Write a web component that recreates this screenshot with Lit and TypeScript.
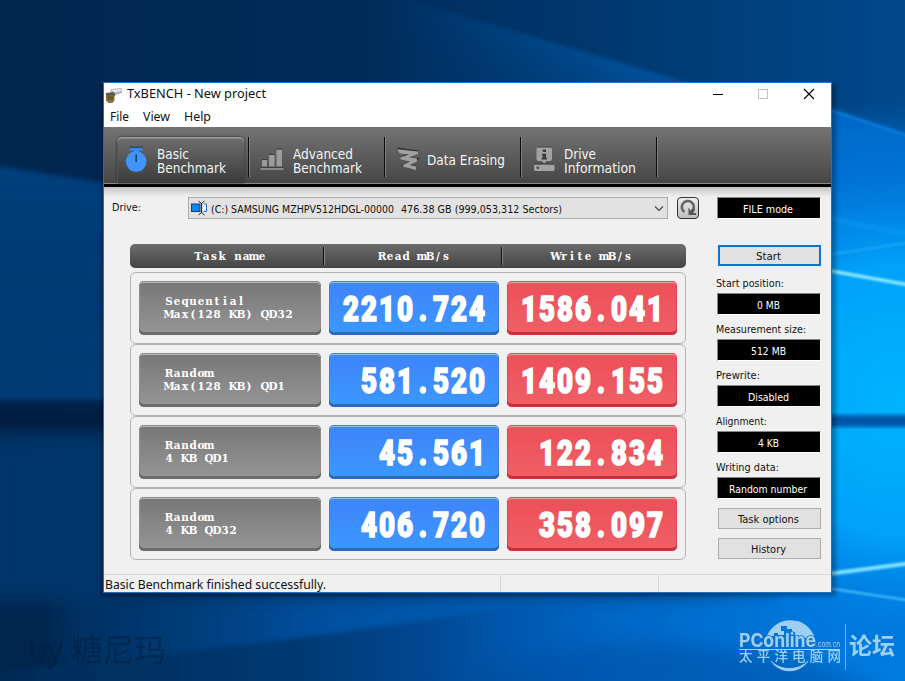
import { LitElement, html, svg, css } from "lit";
import { customElement } from "lit/decorators.js";

/** One line of UI text set to an exact advance width. */
const line = (text: string, width: number, size: number, height: number, baseline: number, dx = 0) => html`
  <svg class="line" width=${width + dx} height=${height} font-size=${size}>
    <text x=${dx} y=${baseline} textLength=${width} lengthAdjust="spacingAndGlyphs">${text}</text>
  </svg>`;

/** Text on a fixed character grid. */
const cells = (text: string, pitch: number, baseline: number) => svg`
  <text y=${baseline} x=${[...text].map((_, i) => pitch * (i + 0.5)).join(" ")}>${text}</text>`;

const icons: Record<string, unknown> = {
  timer: svg`
    <path d="M6 1.500h12.500v3h-3.500v3h-5.500v-3H6z" fill="#3a88ee"/>
    <path d="M6 1.200h12.500" stroke="#14365f" stroke-width="1"/>
    <circle cx="12.200" cy="15.600" r="10.300" fill="#4293fb"/>
    <path d="M12.200 8.500v7.500" stroke="#173a66" stroke-width="1.500"/>`,
  bars: svg`
    <g fill="#9b9b9b"><path d="M2 14h5v6.500H2zM9 9h5.500v11.500H9zM16.500 3.500h5.500v17h-5.500zM.5 22h23v1.800H.5z"/></g>
    <path d="M2 13.500h5M9 8.500h5.500M16.500 3h5.500M.5 21.700h23" stroke="#333" stroke-width=".8"/>`,
  scribble: svg`
    <path d="M1.500 2.500L22 5.500 7 11l14 1.800L8 19l12 2" fill="none" stroke="#2c2c2c" stroke-width="2"/>
    <path d="M1.500 3.300L22 5.500V8L13 11l8 1.500v3L13.500 19l6.500 1.500v3.500L7 20.500V19l7-3.500-9.500-2.300V11.500L13 8.500 3.500 7.200z" fill="#a0a0a0"/>`,
  info: svg`
    <path d="M6 1.200h13" stroke="#2c2c2c"/>
    <path d="M6.500 1.500h11.500a2 2 0 0 1 2 2v9.500a2 2 0 0 1-2 2h-3.500l-2.300 2.800-2.300-2.800H6.500a2 2 0 0 1-2-2V3.500a2 2 0 0 1 2-2z" fill="#a3a3a3"/>
    <path d="M10.800 3.500h3.200v2.600h-3.200zM10 7.700h4v4h1v1.700h-5.400v-1.700h1.100V9.400H10z" fill="#3a3a3a"/>
    <rect x="2" y="18.200" width="20.500" height="6.800" rx="1.500" fill="#a3a3a3"/>
    <path d="M2.500 18h19.500" stroke="#2c2c2c" stroke-width=".8"/>
    <circle cx="5.800" cy="21.700" r="1.300" fill="#444"/>`,
};

interface Tab { icon: string; dx: number; rows: [string, number][]; active?: boolean }
const tabs: Tab[] = [
  { icon: "timer", dx: 0, rows: [["Basic", 32], ["Benchmark", 69]], active: true },
  { icon: "bars", dx: 0, rows: [["Advanced", 60], ["Benchmark", 69]] },
  { icon: "scribble", dx: -2, rows: [["Data Erasing", 78]] },
  { icon: "info", dx: -1, rows: [["Drive", 32], ["Information", 72]] },
];

const results = [
  ["Sequential", "Max(128 KB) QD32", "2210.724", "1586.041"],
  ["Random", "Max(128 KB) QD1", "581.520", "1409.155"],
  ["Random", "4 KB QD1", "45.561", "122.834"],
  ["Random", "4 KB QD32", "406.720", "358.097"],
];

const settings: [string, number, string, number][] = [
  ["Start position:", 68, "0 MB", 23],
  ["Measurement size:", 90, "512 MB", 35],
  ["Prewrite:", 44, "Disabled", 41],
  ["Alignment:", 51, "4 KB", 21],
  ["Writing data:", 63, "Random number", 78],
];

@customElement("desktop-wallpaper")
class DesktopWallpaper extends LitElement {
  static styles = css`
    :host { display: block; }
    svg { display: block; }
  `;
  render() {
    return html`
      <svg width="905" height="681" viewBox="0 0 905 681">
        <defs>
          <linearGradient id="base"><stop offset="0" stop-color="#00264e"/><stop offset=".4" stop-color="#002c5a"/><stop offset=".7" stop-color="#003a72"/><stop offset="1" stop-color="#00498c"/></linearGradient>
          <linearGradient id="left" x1="0" y1="0" x2="0" y2="1"><stop offset="0" stop-color="#00509a" stop-opacity=".6"/><stop offset=".5" stop-color="#004a92" stop-opacity=".55"/><stop offset="1" stop-color="#00509a" stop-opacity=".5"/></linearGradient>
          <radialGradient id="glow" gradientUnits="userSpaceOnUse" cx="900" cy="400" r="300"><stop offset="0" stop-color="#00b4ff"/><stop offset=".45" stop-color="#00a2fa"/><stop offset=".75" stop-color="#0078e0" stop-opacity=".7"/><stop offset="1" stop-color="#0070d0" stop-opacity="0"/></radialGradient>
          <linearGradient id="low"><stop offset="0" stop-color="#004a90" stop-opacity=".2"/><stop offset=".3" stop-color="#0058b0" stop-opacity=".8"/><stop offset=".6" stop-color="#0064c2"/><stop offset="1" stop-color="#0082e8"/></linearGradient>
          <linearGradient id="floor"><stop offset="0" stop-color="#002a54"/><stop offset=".35" stop-color="#003a74"/><stop offset=".5" stop-color="#00448c" stop-opacity=".6"/><stop offset=".68" stop-color="#0060c0" stop-opacity="0"/></linearGradient>
          <linearGradient id="beam" gradientUnits="userSpaceOnUse" x1="560" y1="45" x2="535" y2="125"><stop offset="0" stop-color="#00519a"/><stop offset="1" stop-color="#00386e" stop-opacity="0"/></linearGradient>
          <linearGradient id="fade" gradientUnits="userSpaceOnUse" x1="380" y1="0" x2="640" y2="0"><stop offset="0" stop-color="#000"/><stop offset="1" stop-color="#fff"/></linearGradient>
          <mask id="soft"><rect width="905" height="300" fill="url(#fade)"/></mask>
          <filter id="b2"><feGaussianBlur stdDeviation="2"/></filter>
          <filter id="b1"><feGaussianBlur stdDeviation=".9"/></filter>
          <filter id="b9" x="-20%" y="-50%" width="140%" height="200%"><feGaussianBlur stdDeviation="9"/></filter>
        </defs>
        <rect width="905" height="681" fill="url(#base)"/>
        <g mask="url(#soft)">
          <path d="M380-8L905 148V260H300z" fill="#005098" opacity=".5" filter="url(#b2)"/>
          <path d="M380-8L905 148V200H300z" fill="url(#beam)" filter="url(#b2)"/>
        </g>
        <path d="M-20 163L110 184V410H-20z" fill="url(#left)" filter="url(#b2)"/>
        <path d="M780 92L930 140V640H780z" fill="#0070d4" opacity=".8" filter="url(#b2)"/>
        <path d="M-20 400H120V430H-20z" fill="#001f42" opacity=".8" filter="url(#b2)"/>
        <path d="M-20 436H110V600H-20z" fill="#00488c" opacity=".45" filter="url(#b9)"/>
        <path d="M60 595H930V700H60z" fill="url(#low)" filter="url(#b9)"/>
        <rect width="905" height="681" fill="url(#glow)"/>
        <path d="M-20 674L160 655L330 634L560 600L700 620L930 690V710H-20z" fill="url(#floor)" filter="url(#b2)"/>
        <path d="M420 700C520 650 600 636 700 646S860 676 900 700z" fill="#004c9c" opacity=".45" filter="url(#b9)"/>
        <path d="M820 415H920V427H820z" fill="#0055a6" filter="url(#b2)"/>
        <path d="M820 107L920 140" stroke="#1e90ee" stroke-width="2" opacity=".6" filter="url(#b1)"/>
        <path d="M820 217L920 236" stroke="#18a6ff" stroke-width="3" opacity=".6" filter="url(#b2)"/>
        <path d="M820 256L920 241" stroke="#30b4ff" stroke-width="2" opacity=".6" filter="url(#b1)"/>
        <path d="M820 269L920 287" stroke="#8ae8ff" stroke-width="3.500" filter="url(#b1)"/>
        <path d="M820 575L920 562" stroke="#80e4ff" stroke-width="4" filter="url(#b1)"/>
        <path d="M820 587L920 602" stroke="#4cc4ff" stroke-width="2" filter="url(#b1)"/>
        <rect x="101" y="84" width="735" height="512" opacity=".3" filter="url(#b2)"/>
        <text x="28" y="661" font-size="31" font-family="'Noto Sans','Noto Sans CJK SC',sans-serif" fill="#001f40" opacity=".6" textLength="138" lengthAdjust="spacingAndGlyphs">by 糖尼玛</text>
        <g fill="#b4dcf6" opacity=".88">
          <path d="M767 636a25 25 0 0 1 46-1l-7 3h-7l-4-2v-4h-3v-3h-5v-3h-6v5h3v4h-6v-2h-4v3z"/>
          <path d="M797 621.500a25 25 0 0 1 18 24" fill="none" stroke="#b4dcf6" stroke-width="1.800"/>
          <path d="M771 661c9 10 28 10 37 0c-9 13-28 13-37 0z" stroke="#b4dcf6" stroke-width="1"/>
          <g font-family="Inter,'Liberation Sans',sans-serif" stroke="#1473c8" stroke-width="1.600" paint-order="stroke">
            <text x="739" y="647" font-size="19" font-weight="700" textLength="77" lengthAdjust="spacingAndGlyphs">PConline</text>
            <text x="816" y="647" font-size="8" textLength="24" lengthAdjust="spacingAndGlyphs">.com.cn</text>
          </g>
          <path d="M739 649.500h101" stroke="#b4dcf6" stroke-width="1"/>
          <text x="739" y="661" font-size="13.500" font-weight="500" font-family="'Noto Sans CJK SC',sans-serif" textLength="102">太平洋电脑网</text>
          <path d="M845.500 624v46" stroke="#b4dcf6" opacity=".7"/>
          <text x="849" y="654" font-size="23" font-weight="700" font-family="'Noto Sans CJK SC',sans-serif" textLength="46">论坛</text>
        </g>
      </svg>`;
  }
}

const lineStyles = css`
  .line { display: block; overflow: visible; flex: none; }
  .line text { fill: currentColor; white-space: pre; }
  .compact { font-family: "DejaVu Sans Condensed", "DejaVu Sans", sans-serif; font-stretch: condensed; }
`;

@customElement("tool-bar")
class ToolBar extends LitElement {
  static styles = [lineStyles, css`
    :host { display: flex; box-sizing: border-box; height: 60px; padding: 10px 0 0 9px;
      background: linear-gradient(#747474, #464646 56px, #8a8a8a 56px, #8a8a8a 57px, #000 57px); color: #f4f4f4; }
    .tab { width: 136px; height: 46px; box-sizing: border-box; padding: 0 5px 0 4px; position: relative; }
    .tab::after { content: ""; position: absolute; left: 135px; top: 0; width: 2px; height: 40px;
      background: linear-gradient(90deg, #0c0c0c 1px, #808080 1px); }
    .face { display: flex; align-items: flex-start; height: 46px; padding-left: 7px; box-sizing: border-box; }
    .active .face { border-radius: 5px 5px 0 0; background: linear-gradient(#6e6e6e, #3b3b3b);
      box-shadow: inset 0 1.500px 0 #9c9c9c, inset 1px 0 0 #555, 0 0 3px #2c2c2c; }
    .icon { flex: none; margin: 9px 9px 0 0; }
    .text { display: flex; flex-direction: column; padding-top: 10px; }
    .single { padding-top: 16px; }
  `];
  render() {
    return tabs.map(t => html`
      <div class="tab ${t.active ? "active" : ""}">
        <div class="face">
          <svg class="icon" width="24" height="26" viewBox="0 0 24 26">${icons[t.icon]}</svg>
          <div class="text compact ${t.rows.length === 1 ? "single" : ""}">
            ${t.rows.map(([s, w]) => line(s, w, 13.4, 14, 12, t.dx))}
          </div>
        </div>
      </div>`);
  }
}

@customElement("result-table")
class ResultTable extends LitElement {
  static styles = css`
    :host { display: block; width: 556px; }
    svg { display: block; overflow: visible; }
    .head, .row { display: grid; box-sizing: border-box; }
    .head { height: 24px; grid-template-columns: 193px 178px 185px; border-radius: 5px; margin-bottom: 4px;
      background: linear-gradient(#6c6c6c, #454545); }
    .h { display: flex; justify-content: center; padding-left: 7px; }
    .h + .h { padding: 0 0 0 4px; background: linear-gradient(90deg, #111 1px, #858585 1px) 0 3px / 2px 18px no-repeat; }
    .h + .h + .h { padding: 0 3px 0 0; }
    .row { height: 72px; grid-template-columns: 182px 170px 170px; gap: 8px; padding: 8px; border: 1px solid #b2b2b2;
      border-radius: 6px; }
    .cell { height: 54px; box-sizing: border-box; border-radius: 5px; display: flex; }
    .name { background: linear-gradient(#777, #969696); padding-left: 26px;
      box-shadow: inset 0 -3px 0 #6b6b6b, inset 0 0 0 1px #8d8d8d, inset 0 2px 0 #b4b4b4; }
    .value { justify-content: flex-end; padding-right: 13px; }
    .read { background: linear-gradient(#3f83fb, #3c98ff);
      box-shadow: inset 0 -3px 0 #2a6cbb, inset 0 0 0 1px #4480d8, inset 0 2px 0 #98bdf5; }
    .write { background: linear-gradient(#ee4e57, #ef6067);
      box-shadow: inset 0 -3px 0 #cf2c3a, inset 0 0 0 1px #dd4a55, inset 0 2px 0 #f3a0a6; }
    .slab { font: bold 11.500px "DejaVu Serif Condensed", "DejaVu Serif", serif; font-stretch: condensed; fill: #fff; text-anchor: middle; }
    .big { font: 900 34.500px Roboto, sans-serif; fill: #fff; stroke: #fff; stroke-width: 1.600px; text-anchor: middle; }
  `;
  private slab(rows: string[], base: number, height: number) {
    const n = Math.max(...rows.map(r => r.length));
    return html`<svg class="slab" width=${n * 8} height=${height}>${rows.map((r, i) => cells(r, 8, base + 13 * i))}</svg>`;
  }
  private big(v: string) {
    return html`<svg class="big" width=${v.length * 18} height="54"><g transform="scale(.8 1)">${cells(v, 22.5, 40.5)}</g></svg>`;
  }
  render() {
    return html`
      <div class="head">${["Task name", "Read mB/s", "Write mB/s"].map(h => html`<div class="h">${this.slab([h], 16, 24)}</div>`)}</div>
      ${results.map(([a, b, r, w]) => html`
        <div class="row">
          <div class="cell name">${this.slab([a, b], 24, 54)}</div>
          <div class="cell value read">${this.big(r)}</div>
          <div class="cell value write">${this.big(w)}</div>
        </div>`)}`;
  }
}

@customElement("side-panel")
class SidePanel extends LitElement {
  static styles = [lineStyles, css`
    :host { display: flex; flex-direction: column; width: 104px; }
    .lcd, .btn { display: flex; justify-content: center; box-sizing: border-box; padding-right: 2px; }
    .lcd { height: 22px; background: #000; color: #fff; border: 1px solid; border-color: #868686 #fff #fff #868686; }
    .btn { height: 21px; margin: 0 0 9px 1px; background: #e1e1e1; border: 1px solid #adadad; }
    .start { border: 2px solid #0f74cc; margin: 26px 0 0 1px; }
    .label { height: 24px; display: flex; align-items: flex-end; margin-left: -1px; }
    .start + .label { height: 27px; }
    .last { height: 9px; }
  `];
  render() {
    return html`
      <div class="lcd">${line("FILE mode", 50, 11.2, 20, 15)}</div>
      <div class="btn start">${line("Start", 25, 11.2, 17, 13)}</div>
      ${settings.map(([l, lw, v, vw]) => html`
        <div class="label">${line(l, lw, 11.2, 20, 14)}</div>
        <div class="lcd">${line(v, vw, 11.2, 20, 15)}</div>`)}
      <div class="last"></div>
      <div class="btn">${line("Task options", 61, 11.2, 19, 14)}</div>
      <div class="btn">${line("History", 35, 11.2, 19, 14)}</div>`;
  }
}

@customElement("app-root")
class AppRoot extends LitElement {
  static styles = [lineStyles, css`
    :host { display: block; position: relative; width: 905px; height: 681px; overflow: hidden;
      font-family: "Noto Sans", "Open Sans", sans-serif; color: #111; }
    desktop-wallpaper { position: absolute; inset: 0; }
    .window { position: absolute; left: 103px; top: 82px; width: 729px; height: 511px; box-sizing: border-box;
      border: 1px solid #1674c8; background: #f0f0f0; display: flex; flex-direction: column; }
    .title { height: 24px; background: #fff; display: flex; align-items: center; }
    .app { flex: none; margin: 1px 4px 0 2px; }
    .controls { margin-left: auto; }
    .menu { height: 20px; background: #fff; display: flex; gap: 14px; padding-left: 6px; }
    .body { flex: 1; display: grid; grid-template-columns: 605px 104px; padding: 10px 0 0 8px;
      background: linear-gradient(#c4c4c4, #f0f0f0 10px); }
    .drive { display: flex; height: 22px; margin-bottom: 25px; }
    .label { width: 76px; }
    .select { width: 480px; box-sizing: border-box; border: 1px solid #adadad; background: #e2e2e2; display: flex; }
    .disk { flex: none; margin: 1px 3px 0 2px; }
    .chev { margin: 7px 3px 0 auto; }
    .reload { width: 22px; box-sizing: border-box; margin-left: 9px; border: 1px solid #333; border-radius: 4px; background: linear-gradient(#eee, #bdbdbd); }
    result-table { margin-left: 18px; }
    .status { height: 18px; border-top: 1px solid #d7d7d7; box-sizing: border-box; display: grid; grid-template-columns: 397px 158px 1fr; }
    .status div { border-right: 1px solid #d7d7d7; padding-left: 1px; }
    .status div:last-child { border: 0; }
  `];
  render() {
    return html`
      <desktop-wallpaper></desktop-wallpaper>
      <div class="window">
        <div class="title">
          <svg class="app" width="17" height="16" viewBox="0 0 17 16">
            <path d="M5 1l10-1 1 1v4l-8 3-4-2z" fill="#b4baba"/>
            <path d="M6 2l9-1v2L8 4.500z" fill="#e8ecec"/>
            <path d="M0 5l8-1 1 2v2H0z" fill="#5a5a50"/>
            <path d="M0 7.500h8.500v5L6.500 15h-4L0 12.500z" fill="#8b7440"/>
            <path d="M1.500 9h6M1.500 11h6" stroke="#4d4024"/>
          </svg>
          ${line("TxBENCH - New project", 139, 13, 20, 13)}
          <svg class="controls" width="118" height="24" viewBox="0 0 118 24" fill="none">
            <path d="M-1 11.500h11" stroke="#000"/>
            <rect x="45.500" y="6.500" width="9" height="9" stroke="#c4c4c4"/>
            <path d="M91 6l10 10M101 6l-10 10" stroke="#000" stroke-width="1.100"/>
          </svg>
        </div>
        <div class="menu">
          ${line("File", 19, 13, 20, 14)}${line("View", 27, 13, 20, 14)}${line("Help", 27, 13, 20, 14)}
        </div>
        <tool-bar></tool-bar>
        <div class="body compact">
          <div>
            <div class="drive">
              <div class="label">${line("Drive:", 29, 11.2, 20, 14)}</div>
              <div class="select">
                <svg class="disk" width="17" height="18" viewBox="0 0 17 18" fill="none">
                  <rect x=".5" y="5" width="8.500" height="7.500" fill="#1583e6" stroke="#0b3f96"/>
                  <path d="M12.500 5h3v7.500h-3" fill="#fff" stroke="#1d6fd0"/>
                  <path d="M7.500 2l3 2.500 3-2.500M10.500 4v10M7.500 16l3-2.500 3 2.500" stroke="#222"/>
                </svg>
                ${line("(C:) SAMSUNG MZHPV512HDGL-00000", 183, 11.2, 20, 15)}
                ${line("476.38 GB (999,053,312 Sectors)", 161, 11.2, 20, 15, 7)}
                <svg class="chev" width="10" height="7" viewBox="0 0 10 7" fill="none"><path d="M1 1.500l4 4 4-4" stroke="#444" stroke-width="1.100"/></svg>
              </div>
              <div class="reload">
                <svg width="20" height="20" viewBox="0 0 20 20" fill="none">
                  <path d="M6.500 14A6 6 0 1 1 14.700 12.500" stroke="#666" stroke-width="2.600"/>
                  <path d="M10.500 9.500v7.500h7.500v-2h-3l2-3-2-1.500-2.500 2z" fill="#555"/>
                </svg>
              </div>
            </div>
            <result-table></result-table>
          </div>
          <side-panel></side-panel>
        </div>
        <div class="status">
          <div>${line("Basic Benchmark finished successfully.", 221, 13, 17, 14)}</div><div></div><div></div>
        </div>
      </div>`;
  }
}
